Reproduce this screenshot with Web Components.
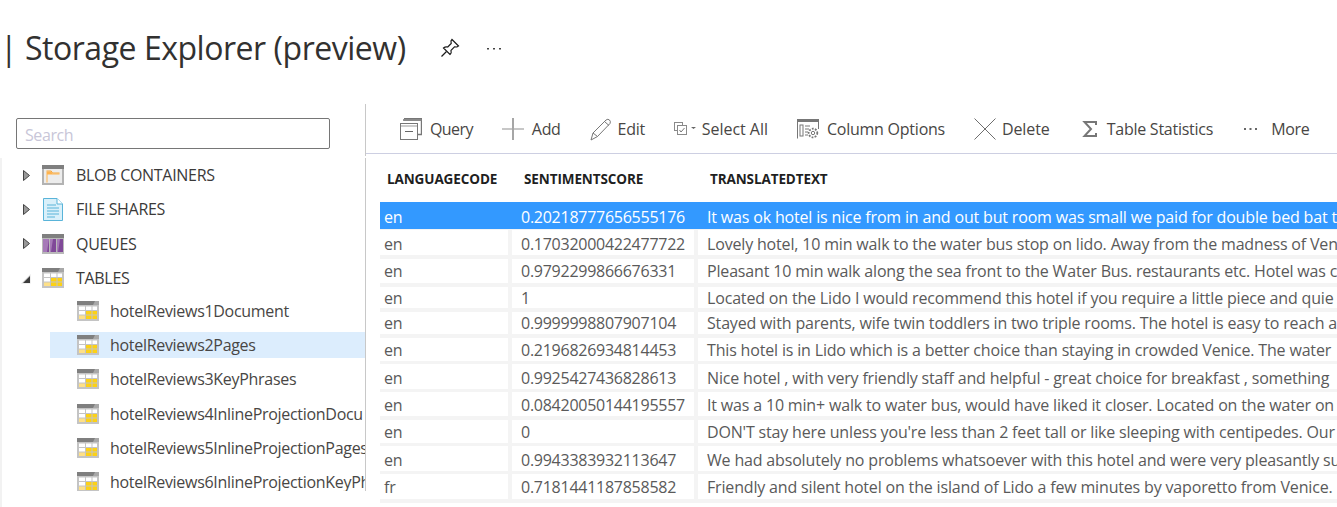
<!DOCTYPE html>
<html>
<head>
<meta charset="utf-8">
<title>Storage Explorer</title>
<style>
  html, body { margin: 0; height: 100%; background: #fff; overflow: hidden; }
  body { font-family: "Open Sans", "Noto Sans", sans-serif; }
</style>
</head>
<body>
<storage-page></storage-page>

<script>
const ICONS = {
  table: `<svg width="22" height="20" viewBox="0 0 22 20"><rect width="22" height="20" fill="#c4c4c4"/><path d="M0 0h22v4H0z" fill="#7f7f7f"/><path d="M18 0h4v4h-6z" fill="#a8a8a8"/><path d="M2 5.500h6v3.500H2zM9 5.500h5.500v3.500H9zM15.500 5.500H20v3.500h-4.500zM2 10h6v3.500H2z" fill="#fff"/><path d="M9 10h5.500v3.500H9zM15.500 10H20v3.500h-4.500zM9 14.500h5.500V18H9zM15.500 14.500H20V18h-4.500z" fill="#fcd116"/><path d="M2 14.500h6V18H2z" fill="#fee087"/></svg>`,
  blob: `<svg width="22" height="20" viewBox="0 0 22 20"><rect width="22" height="20" fill="#b3b3b3"/><path d="M0 0h22v4H0z" fill="#7f7f7f"/><path d="M2 4h18v14H2z" fill="#ececec"/><path d="M4.500 17.500V6.500h4.500l1.500 2h7v1H5.500v8z" fill="#ffb34d"/><path d="M4.500 6h4.700l1.300 2h7" fill="none" stroke="#f7a73b"/></svg>`,
  file: `<svg width="20" height="23" viewBox="0 0 20 23"><path d="M.5.500h13.500l5.500 5.500v16.500H.5z" fill="#d9f0fa" stroke="#59b4d9"/><path d="M14 .5v5.500h5.500" fill="#fff" stroke="#59b4d9"/><path d="M4 7h9M4 10h12M4 13h12M4 16h12M4 19h8" stroke="#59b4d9" fill="none"/></svg>`,
  queue: `<svg width="22" height="20" viewBox="0 0 22 20"><rect width="22" height="20" fill="#b9b9b9"/><path d="M0 0h22v4H0z" fill="#7f7f7f"/><path d="M1 5h6v13H1zM8 5h6v13H8zM15 5h6v13h-6z" fill="#804998"/><path d="M1 5h6l-2 13H1zM8 5h3l-2 13H8zM15 5h3l-2 13h-1z" fill="#a67ab8"/></svg>`,
  right: `<svg width="9" height="13" viewBox="0 0 9 13"><path d="M1.500 1.500l6 5-6 5z" fill="#999" stroke="#444"/></svg>`,
  down: `<svg width="10" height="11" viewBox="0 0 10 11"><path d="M9.500 1v9.500H0z" fill="#e0e0e0"/><path d="M9 3v7H2z" fill="#3c3c3c"/></svg>`,
  query: `<svg width="22" height="22" viewBox="0 0 22 22" fill="none" stroke="#777"><path d="M4 .8h18M21.500 1v15.500H18M4 3V1" stroke-width="1.400"/><path d="M3.500 2h18" stroke-width="2" stroke="#8a8a8a"/><rect x=".5" y="5.500" width="17" height="16"/><path d="M1 8h16" stroke="#999"/><path d="M5 13.500h8" stroke="#666"/></svg>`,
  add: `<svg width="22" height="22" viewBox="0 0 22 22"><path d="M0 11h22" stroke="#8f8f8f" fill="none"/><path d="M11 0v22" stroke="#a6a6a6" stroke-width="2" fill="none"/></svg>`,
  edit: `<svg width="22" height="23" viewBox="0 0 22 23" fill="none" stroke="#777"><path d="M1 22l2-7L16 2q2-1.500 3.500 0t.5 3.500L7.500 18.500z"/><path d="M3 15l4.500 3.500M14.500 3.500L19 7.500"/></svg>`,
  select: `<svg width="22" height="15" viewBox="0 0 22 15" fill="none" stroke="#8a8a8a"><rect x=".5" y=".5" width="8" height="8"/><rect x="3.500" y="3.500" width="9" height="9" fill="#fff"/><path d="M5.500 8l1.500 2 3.500-4" stroke="#777"/><path d="M17 5h5l-2.500 2z" fill="#666" stroke="none"/></svg>`,
  columns: `<svg width="22" height="20" viewBox="0 0 22 20" fill="none" stroke="#777"><path d="M.5 19.500V.5h21V10"/><path d="M0 1.500h22" stroke-width="3" stroke="#777"/><rect x="3" y="6" width="3" height="11"/><path d="M8 7h5M8 10h4M8 13h3M8 16h3"/><circle cx="16" cy="14" r="4.300" stroke-width="1.800" stroke-dasharray="1.800 1.300" fill="#fff"/><circle cx="16" cy="14" r="1.700"/></svg>`,
  del: `<svg width="22" height="22" viewBox="0 0 22 22"><path d="M.5.500l21 21M21.500.5l-21 21" stroke="#6e6e6e" fill="none"/></svg>`,
  sigma: `<svg width="22" height="18" viewBox="0 0 22 18"><path d="M17 5V2H5.500l6.500 7-6.500 7H17v-3" stroke="#777" stroke-width="2" fill="none"/></svg>`,
  more: `<svg width="22" height="4" viewBox="0 0 22 4"><path d="M2 1h2v2H2zM7.500 1h2v2h-2zM13 1h2v2h-2z" fill="#666"/></svg>`,
  pin: `<svg width="20" height="20" viewBox="0 0 20 20" fill="none" stroke="#1b1b1b" stroke-width="1.200"><path d="M12 1.500L18.500 8 17 9l-2.500-.2-3.500 3.500q.8 2.700-1 4.200L3.500 10q2-1.700 4.200-1l3.500-3.500L11 3z"/><path d="M6.500 13.500l-5 5"/></svg>`,
  dots: `<svg width="14" height="3" viewBox="0 0 14 3"><path d="M0 1h2v1.500H0zM6 1h2v1.500H6zM12 1h2v1.500h-2z" fill="#444"/></svg>`
};

class AppIcon extends HTMLElement {
  connectedCallback() {
    this.attachShadow({mode: 'open'}).innerHTML = `
      <style>:host { display: inline-flex; align-items: center; justify-content: center; flex: none; } svg { display: block; }</style>
      ${ICONS[this.getAttribute('name')]}`;
  }
}
customElements.define('app-icon', AppIcon);

class PageHeader extends HTMLElement {
  connectedCallback() {
    this.attachShadow({mode: 'open'}).innerHTML = `
      <style>
        :host { display: flex; align-items: center; height: 104px; box-sizing: border-box; padding-bottom: 9px; }
        h1 { margin: 0; font: 400 32px/40px "Open Sans", sans-serif; letter-spacing: -.47px; color: #323130; white-space: nowrap; }
        .pin { margin-left: 34px; }
        .dots { margin-left: 27px; position: relative; top: 1px; }
      </style>
      <h1><slot></slot></h1>
      <app-icon class="pin" name="pin"></app-icon>
      <app-icon class="dots" name="dots"></app-icon>`;
  }
}
customElements.define('page-header', PageHeader);

class SearchBox extends HTMLElement {
  connectedCallback() {
    this.attachShadow({mode: 'open'}).innerHTML = `
      <style>
        :host { display: block; width: 314px; height: 31px; box-sizing: border-box; margin: 14px 0 0 16px; border: 1px solid #767676; border-radius: 2px; }
        span { display: block; height: 26px; padding: 3px 0 0 8px; font-size: 16px; line-height: 27px; letter-spacing: -.4px; color: #c8c6d8; }
      </style>
      <span>Search</span>`;
  }
}
customElements.define('search-box', SearchBox);

class TreeNode extends HTMLElement {
  connectedCallback() {
    const arrow = this.getAttribute('arrow');
    this.attachShadow({mode: 'open'}).innerHTML = `
      <style>
        :host { display: flex; align-items: center; height: 34.3px; font-size: 16px; letter-spacing: -.3px; white-space: nowrap; color: #3b3a39; }
        :host([child]) { color: #484644; padding-left: 50px; }
        :host([selected]) .row { background: #dcedfd; }
        .row { display: flex; align-items: center; flex: 1; min-width: 0; height: 26px; overflow: hidden; }
        :host([child]) .row { padding-left: 27px; }
        :host([child]) .img { margin-right: 11px; }
        .arrow { width: 10px; margin: 0 11px 0 21px; }
        .img { width: 22px; margin-right: 12px; }
      </style>
      <div class="row">
        ${arrow ? `<app-icon class="arrow" name="${arrow}"></app-icon>` : ''}
        <app-icon class="img" name="${this.getAttribute('icon')}"></app-icon>
        <slot></slot>
      </div>`;
  }
}
customElements.define('tree-node', TreeNode);

class StorageTree extends HTMLElement {
  connectedCallback() {
    this.attachShadow({mode: 'open'}).innerHTML = `
      <style>
        :host { display: flex; flex-direction: column; flex: none; width: 366px; box-sizing: border-box; height: 403px; }
        .top { border-right: 1px solid #c8c8c8; height: 52px; box-sizing: border-box; padding-top: .1px; }
        .side { flex: 1; padding-top: 2px; border-left: 2px solid #f2f2f2; min-height: 0; }
        .list { margin-left: -2px; height: 333px; overflow: hidden; border-right: 1px solid #c8c8c8; box-shadow: 0 -2px 0 #fff; }
      </style>
      <div class="top"><search-box></search-box></div>
      <div class="side"><div class="list"><slot></slot></div></div>`;
  }
}
customElements.define('storage-tree', StorageTree);

class ToolButton extends HTMLElement {
  connectedCallback() {
    this.attachShadow({mode: 'open'}).innerHTML = `
      <style>
        :host { display: flex; align-items: center; gap: var(--g, 8px); font-size: 16px; letter-spacing: var(--ls, -.3px); color: #484644; white-space: nowrap; }
      </style>
      <app-icon name="${this.getAttribute('icon')}"></app-icon>
      <slot></slot>`;
  }
}
customElements.define('tool-button', ToolButton);

class ToolBar extends HTMLElement {
  connectedCallback() {
    this.attachShadow({mode: 'open'}).innerHTML = `
      <style>
        :host { display: flex; align-items: center; gap: 29px; height: 50px; box-sizing: border-box; padding: 1px 0 0 34px; border-bottom: 1px solid #cdcfe2; }
      </style>
      <slot></slot>`;
  }
}
customElements.define('tool-bar', ToolBar);

class DataHead extends HTMLElement {
  connectedCallback() {
    this.attachShadow({mode: 'open'}).innerHTML = `
      <style>
        :host { display: grid; grid-template-columns: 137px 186px 1fr; height: 48px; padding: 0 0 0 21px; align-items: center; font-size: 13.5px; font-weight: 700; letter-spacing: -.1px; color: #1f1f1f; white-space: nowrap; }
        div { position: relative; top: 1px; }
      </style>
      <div>LANGUAGECODE</div><div>SENTIMENTSCORE</div><div>TRANSLATEDTEXT</div>`;
  }
}
customElements.define('data-head', DataHead);

class DataRow extends HTMLElement {
  connectedCallback() {
    const h = this.getAttribute('h');
    const g = this.getAttribute('g');
    const o = this.getAttribute('o') || 0;
    this.attachShadow({mode: 'open'}).innerHTML = `
      <style>
        :host { display: grid; grid-template-columns: 128px 182px minmax(0, 1fr); column-gap: 4px; height: ${h}px; margin-bottom: ${g}px; font-size: 16px; line-height: 18px; letter-spacing: -.17px; color: #5a5a5a; white-space: nowrap; }
        :host([selected]) { background: #3399ff; color: #fff; }
        div { background: #fff; overflow: hidden; padding: ${o}px 0 0 9px; display: flex; align-items: center; box-sizing: border-box; }
        .lang { padding-left: 4px; }
        .score { letter-spacing: -.26px; }
        :host([selected]) div { background: none; }
      </style>
      <div class="lang">${this.getAttribute('lang-code')}</div>
      <div class="score">${this.getAttribute('score')}</div>
      <div><slot></slot></div>`;
  }
}
customElements.define('data-row', DataRow);

class DataTable extends HTMLElement {
  connectedCallback() {
    this.attachShadow({mode: 'open'}).innerHTML = `
      <style>
        :host { display: block; margin-left: 14px; background: #f4f4f4; height: 301px; overflow: hidden; }
      </style>
      <slot></slot>`;
  }
}
customElements.define('data-table', DataTable);

class StoragePage extends HTMLElement {
  connectedCallback() {
    const rows = [
      [27, 1, 'en', '0.20218777656555176', 'It was ok hotel is nice from in and out but room was small we paid for double bed bat t', 1],
      [25, 4, 'en', '0.17032000422477722', 'Lovely hotel, 10 min walk to the water bus stop on lido. Away from the madness of Ven'],
      [24, 4, 'en', '0.9792299866676331', 'Pleasant 10 min walk along the sea front to the Water Bus. restaurants etc. Hotel was co'],
      [21, 4, 'en', '1', 'Located on the Lido I would recommend this hotel if you require a little piece and quie'],
      [22, 4, 'en', '0.9999998807907104', 'Stayed with parents, wife twin toddlers in two triple rooms. The hotel is easy to reach a'],
      [23, 3, 'en', '0.2196826934814453', 'This hotel is in Lido which is a better choice than staying in crowded Venice. The water'],
      [25, 3, 'en', '0.9925427436828613', 'Nice hotel , with very friendly staff and helpful - great choice for breakfast , something'],
      [24, 4, 'en', '0.08420050144195557', 'It was a 10 min+ walk to water bus, would have liked it closer. Located on the water on'],
      [23, 3, 'en', '0', "DON'T stay here unless you're less than 2 feet tall or like sleeping with centipedes. Our"],
      [25, 3, 'en', '0.9943383932113647', 'We had absolutely no problems whatsoever with this hotel and were very pleasantly su'],
      [25, 4, 'fr', '0.7181441187858582', 'Friendly and silent hotel on the island of Lido a few minutes by vaporetto from Venice.']
    ];
    const offsets = [2, 2, 0, 1, 0, 0, 2, 1, 1, 3, 1];
    const rowHtml = rows.map(([h, g, l, s, t, sel], i) =>
      `<data-row h="${h}" g="${g}" o="${offsets[i]}" lang-code="${l}" score="${s}"${sel ? ' selected' : ''}>${t}</data-row>`).join('');
    this.attachShadow({mode: 'open'}).innerHTML = `
      <style>
        :host { display: block; height: 507px; overflow: hidden; }
        .main { display: flex; height: 403px; }
        .right { flex: 1; min-width: 0; }
        .last-root { margin-bottom: -1.5px; }
      </style>
      <page-header>| Storage Explorer (preview)</page-header>
      <div class="main">
        <storage-tree>
          <tree-node arrow="right" icon="blob">BLOB CONTAINERS</tree-node>
          <tree-node arrow="right" icon="file">FILE SHARES</tree-node>
          <tree-node arrow="right" icon="queue">QUEUES</tree-node>
          <tree-node class="last-root" arrow="down" icon="table">TABLES</tree-node>
          <tree-node child icon="table">hotelReviews1Document</tree-node>
          <tree-node child selected icon="table">hotelReviews2Pages</tree-node>
          <tree-node child icon="table">hotelReviews3KeyPhrases</tree-node>
          <tree-node child icon="table">hotelReviews4InlineProjectionDocu</tree-node>
          <tree-node child icon="table">hotelReviews5InlineProjectionPages</tree-node>
          <tree-node child icon="table">hotelReviews6InlineProjectionKeyPh</tree-node>
        </storage-tree>
        <div class="right">
          <tool-bar>
            <tool-button icon="query" style="--ls:-.6px">Query</tool-button>
            <tool-button icon="add">Add</tool-button>
            <tool-button icon="edit" style="--g:6px">Edit</tool-button>
            <tool-button icon="select" style="--g:6px;--ls:-.04px">Select All</tool-button>
            <tool-button icon="columns" style="--ls:-.24px">Column Options</tool-button>
            <tool-button icon="del" style="--g:6px;--ls:-.1px">Delete</tool-button>
            <tool-button icon="sigma" style="--g:6px;--ls:-.25px">Table Statistics</tool-button>
            <tool-button icon="more" style="--g:7px">More</tool-button>
          </tool-bar>
          <data-head></data-head>
          <data-table>${rowHtml}</data-table>
        </div>
      </div>`;
  }
}
customElements.define('storage-page', StoragePage);
</script>
</body>
</html>
